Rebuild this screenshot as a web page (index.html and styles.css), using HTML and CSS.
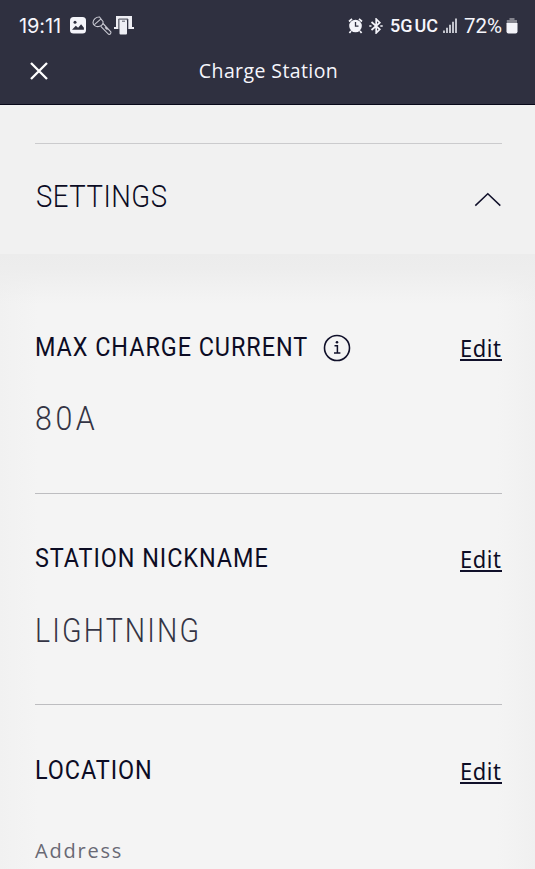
FILE: index.html
```html
<!DOCTYPE html>
<html lang="en">
<head>
<meta charset="utf-8">
<title>Charge Station</title>
<link rel="stylesheet" href="styles.css">
</head>
<body>
<header class="header">
  <div class="status">
    <span class="clock">19:11</span>
    <svg class="s-photo" width="16" height="17" viewBox="0 0 16 17"><rect width="16" height="16.5" rx="3.5" fill="#f4f4fa"/><circle cx="5" cy="5.3" r="1.5" fill="#2f3040"/><path d="M2.2 12.5 5.8 8.7l2.3 2.1 3-3.6 2.8 3.5v2.1H2.2z" fill="#2f3040"/></svg>
    <svg class="s-torch" width="20" height="20" viewBox="0 0 20 20" fill="none" stroke="#c9c9d2" stroke-width="1.1"><path d="M1 6.5C1 3.5 4 .8 7.5 1l3.6 4.6c.3 2.6-1.6 4.6-4.4 4.9C3.6 11 1 9 1 6.5z"/><path d="M2.4 8.6 9 2.8M11 7.5l7.8 8.3c.6 1.5-.8 3-2.2 2.5L8.8 10.4M13 11.3l2.4 2.4"/></svg>
    <svg class="s-share" width="20" height="19" viewBox="0 0 20 19"><path d="M2 0h16v11h2v2h-6V3.5H5.5V13H0v-2h2z" fill="#eeeef4"/><rect x="5.5" y="3.5" width="7.5" height="15" rx="1" fill="#eeeef4"/><path d="M4.7 13V3h9.2v10M8 5.2h3" stroke="#343544" fill="none" stroke-width=".8"/></svg>
    <svg class="s-alarm" width="15" height="16" viewBox="0 0 15 16"><path d="m1 3.5 3-2.6M14 3.5l-3-2.6M3 13l-1.6 2M12 13l1.6 2" stroke="#f4f4fa" stroke-width="1.7"/><circle cx="7.5" cy="8" r="6.3" fill="#f4f4fa"/><path d="M7.5 4v4.2h3" fill="none" stroke="#2f3040" stroke-width="1.3"/></svg>
    <svg class="s-bt" width="14" height="16" viewBox="0 0 14 16" fill="none" stroke="#f4f4fa" stroke-width="1.7"><path d="m2.5 4 8.3 7.3-3.6 3.6V1.1l3.6 3.6L2.5 12"/><path d="M.3 8h2.2M11.3 8h2.4"/></svg>
    <span class="network">5G<i></i>UC</span>
    <svg class="s-signal" width="14" height="15" viewBox="0 0 14 15" stroke="#f4f4fa" stroke-width="1.5"><path d="M1 15v-2.5M4 15V9.8M7 15V6.8M10 15V3.8M13 15V.5"/></svg>
    <span class="percent">72%</span>
    <svg class="s-battery" width="12" height="16" viewBox="0 0 12 16"><path d="M3.5 0h5v2H11v4H.8V2h2.7z" fill="#85858f"/><path d="M.5 5h11v8.5a2 2 0 0 1-2 2h-7a2 2 0 0 1-2-2z" fill="#f4f4fa"/></svg>
  </div>
  <div class="nav">
    <svg class="close" width="18" height="18" viewBox="0 0 18 18" stroke="#fff" stroke-width="2.3"><path d="m1 1 16 16M17 1 1 17"/></svg>
    <h1 class="title"><span>Charge Station</span></h1>
  </div>
</header>
<main>
  <section class="settings">
    <div class="settings-row">
      <h2 class="heading"><span>SETTINGS</span></h2>
      <svg class="chevron" width="28" height="15" viewBox="0 0 28 15" fill="none" stroke="#10102a" stroke-width="1.5"><path d="M1.3 13.6 13.8 1.7l12.5 11.9"/></svg>
    </div>
  </section>
  <div class="panel">
    <section class="item">
      <div class="item-head">
        <h3 class="label"><span>MAX CHARGE CURRENT</span></h3>
        <svg class="info" width="28" height="28" viewBox="0 0 28 28" fill="none" stroke="#10102a" stroke-width="1.6"><circle cx="14" cy="14" r="12.5"/><path d="M11.5 11.7h2.9v7.2M11 19h6.4" stroke-width="1.5"/><circle cx="14" cy="8.2" r="1.3" fill="#10102a" stroke="none"/></svg>
        <a class="edit"><span>Edit</span></a>
      </div>
      <p class="value"><span class="amps">80A</span></p>
    </section>
    <section class="item">
      <div class="item-head">
        <h3 class="label"><span>STATION NICKNAME</span></h3>
        <a class="edit"><span>Edit</span></a>
      </div>
      <p class="value"><span>LIGHTNING</span></p>
    </section>
    <section class="item">
      <div class="item-head">
        <h3 class="label"><span>LOCATION</span></h3>
        <a class="edit"><span>Edit</span></a>
      </div>
      <p class="address">Address</p>
    </section>
  </div>
</main>
</body>
</html>
```
FILE: styles.css
```css
* { box-sizing: border-box; }
html, body { margin: 0; height: 869px; overflow: hidden; }
body { background: #f1f1f1; font-family: Roboto, sans-serif; color: #0c0c24; }
h1, h2, h3, p { margin: 0; font-weight: 400; }
svg { display: block; flex: none; }
span { display: inline-block; white-space: nowrap; transform-origin: 0 50%; }

.header { height: 105px; background: #2f3040; border-bottom: 1px solid #080819; color: #f6f6fc; }
.status { display: flex; align-items: center; height: 50px; padding: 1px 16px 0 19px; }
.clock { width: 43px; font: 20px/24px Inter, sans-serif; letter-spacing: -.1px; }
.s-photo { margin-left: 8px; }
.s-torch { margin-left: 6px; }
.s-share { margin-left: 2px; margin-right: 1px; }
.s-alarm { margin-left: auto; }
.s-bt { margin-left: 7px; }
.network { width: 49px; margin-left: 7px; font: 500 18px/24px Roboto, sans-serif; }
.network i { display: inline-block; width: 2px; }
.s-signal { margin-left: 4px; }
.percent { width: 43px; margin-left: 7px; font: 20.5px/24px Roboto, sans-serif; }
.s-battery { margin-right: 1px; margin-left: -1px; }
.status .s-alarm { margin-right: -1px; }
.nav { display: grid; grid-template-columns: 60px 1fr 60px; align-items: center; height: 42px; }
.close { margin-left: 30px; }
.title { padding-left: 2px; text-align: center; font: 500 19.5px/24px "Open Sans", sans-serif; letter-spacing: .4px; }
.title span { margin-top: -1px; }

.settings { height: 149px; padding: 38px 33px 0 35px; }
.settings-row { display: flex; align-items: center; justify-content: space-between; height: 108px; border-top: 1px solid #cbcbcd; padding-left: 1px; }
.heading { margin-top: -3px; font-size: 32px; line-height: 38px; font-weight: 300; }
.heading span { letter-spacing: .6px; transform: scaleX(.86); }
.chevron { margin-top: 4px; }

.panel { height: 615px; padding: 28px 33px 0 35px; background: linear-gradient(#ececec 0, #ededed 14px, rgba(244,244,244,0) 50px), linear-gradient(90deg, #f1f1f1, #f4f4f4 38px, #f4f4f4 497px, #f0f0f0); }
.item { height: 211.5px; padding-top: 49px; border-bottom: 1px solid #bdbdc0; }
.item:last-child { height: auto; border: 0; }
.item-head { display: flex; align-items: center; height: 32px; }
.label { margin-top: -1px; font-size: 26px; line-height: 30px; }
.label span { letter-spacing: 1.05px; transform: scaleX(.9); }
.label:has(+ .info) { width: 272px; }
.info { margin: 2px 0 0 16px; }
.edit { margin-left: auto; width: 42px; height: 27px; font: 23px/28px "Noto Sans", sans-serif; border-bottom: 2px solid #10102a; }
.edit span { transform: scaleX(.95); letter-spacing: .6px; }
.value { margin-top: 36px; font-size: 33px; line-height: 40px; font-weight: 300; color: #343444; }
.value span { letter-spacing: 2.5px; transform: scaleX(.865); }
.value .amps { letter-spacing: 3.9px; transform: scaleX(.92); }
.address { margin-top: 53px; font: 20px/24px "Open Sans", sans-serif; letter-spacing: 1.8px; color: #696974; }
```
